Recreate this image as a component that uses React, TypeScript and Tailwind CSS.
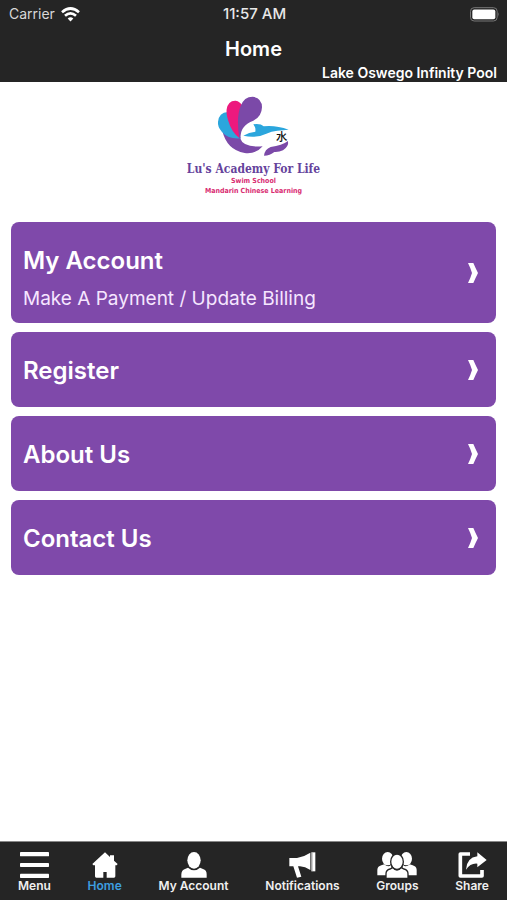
import type { ReactNode } from 'react';

type Entry = { title: string; detail?: string };

const entries: Entry[] = [
  { title: 'My Account', detail: 'Make A Payment / Update Billing' },
  { title: 'Register' },
  { title: 'About Us' },
  { title: 'Contact Us' },
];

function WifiIcon() {
  return (
    <svg viewBox="0 0 57 44" className="h-[15px] w-[19px]" fill="none" stroke="white" strokeWidth="8" aria-hidden="true">
      <path d="M3 15Q28.500-7 54 15" />
      <path d="M12 26Q28.500 11 45 26" />
      <path d="M20 34Q28.500 26 37 34L28.500 43Z" fill="white" stroke="none" />
    </svg>
  );
}

function BatteryIcon() {
  return (
    <svg viewBox="0 0 90 44" className="h-[15px] w-[30px]" aria-label="Battery full">
      <rect x="1.500" y="1.500" width="80" height="40" rx="11" fill="#252525" stroke="#777" strokeWidth="3" />
      <rect x="7" y="7" width="69" height="29" rx="6" fill="white" />
      <path d="M85 15Q90 21 85 28Z" fill="#777" />
    </svg>
  );
}

function Logo() {
  return (
    <svg viewBox="0 0 240 210" className="h-[70px] w-20" aria-label="Lu's Academy For Life logo">
      <path d="M25 116Q48 137 78 138Q88 168 146 163Q126 187 92 183Q38 173 25 116Z" fill="#7b49a8" />
      <path d="M12 90Q14 62 42 60L60 98L80 139Q42 142 24 120Q10 104 12 90Z" fill="#2ba6dd" />
      <path d="M38 52Q42 25 65 26Q78 28 86 42L88 90L76 138Q52 120 42 84Q36 64 38 52Z" fill="#ed197e" />
      <path d="M76 138Q66 75 80 42Q90 14 116 14Q144 18 144 46Q143 74 118 86Q76 102 80 140Z" fill="#7b49a8" />
      <path d="M88 131Q105 121 124 119Q126 107 118 97Q140 94 149 103Q185 99 224 113L190 116Q172 117 157 125Q126 140 88 131Z" fill="#2ba6dd" />
      <path d="M150 191Q152 172 170 165Q204 161 222 147Q225 163 207 175Q195 181 181 180Q168 191 150 191Z" fill="#7b49a8" />
      <text x="203" y="146" textAnchor="middle" fontSize="34" fill="#111" className="font-['Noto_Sans_CJK_SC',sans-serif] font-medium">水</text>
    </svg>
  );
}

function Chevron() {
  return (
    <svg viewBox="0 0 30 60" className="h-5 w-[10px]" fill="white" aria-hidden="true">
      <path d="M0 0H16Q22 14 30 30Q22 46 16 60H0Q8 44 12 30Q8 16 0 0Z" />
    </svg>
  );
}

function MenuIcon() {
  return (
    <svg viewBox="0 0 87 78" className="h-[26px] w-[29px]" fill="white" aria-hidden="true">
      <rect y="0" width="87" height="13" rx="2" />
      <rect y="33" width="87" height="12" rx="2" />
      <rect y="65" width="87" height="13" rx="2" />
    </svg>
  );
}

function HomeIcon() {
  return (
    <svg viewBox="0 0 78 78" className="h-[26px] w-[26px]" fill="white" aria-hidden="true">
      <path d="M39 1L1 36L4 40H9V73Q9 77 13 77H34V60H44V77H66Q70 77 70 73V40H74L77 36L66 26V10H54V15Z" />
    </svg>
  );
}

function PersonIcon() {
  return (
    <svg viewBox="0 0 78 78" className="h-[26px] w-[26px]" fill="white" aria-hidden="true">
      <ellipse cx="39" cy="25" rx="20" ry="25" />
      <path d="M1 77V67Q2 54 12 51L21 47Q39 63 57 47L66 51Q77 54 77 67V77Z" />
    </svg>
  );
}

function MegaphoneIcon() {
  return (
    <svg viewBox="0 0 81 78" className="h-[26px] w-[27px]" fill="white" aria-hidden="true">
      <path d="M1 18H24Q46 14 64 2V54Q48 44 33 43H27L37 74L24 77L13 43H1Z" />
      <rect x="67" y="1" width="12" height="57" />
      <path d="M69 2V57" stroke="#777" strokeWidth="2" />
    </svg>
  );
}

function GroupIcon() {
  return (
    <svg viewBox="0 0 120 78" className="h-[26px] w-10" fill="white" aria-hidden="true">
      <ellipse cx="32" cy="20" rx="17" ry="20" />
      <ellipse cx="88" cy="20" rx="17" ry="20" />
      <path d="M1 70V53Q2 43 13 40L22 37Q33 47 42 39L48 70Z" />
      <path d="M119 70V53Q118 43 107 40L98 37Q87 47 78 39L72 70Z" />
      <g stroke="#252525" strokeWidth="4">
        <path d="M27 79V65Q27 54 39 51L47 47Q60 61 73 47L81 51Q93 54 93 65V79Z" />
        <ellipse cx="60" cy="29" rx="19" ry="23" />
      </g>
    </svg>
  );
}

function ShareIcon() {
  return (
    <svg viewBox="0 0 87 78" className="h-[26px] w-[29px]" aria-hidden="true">
      <path d="M36 6H7V72H72V54" fill="none" stroke="white" strokeWidth="11" strokeLinejoin="round" />
      <path d="M58 1L86 24L58 46V35Q37 33 24 53Q26 17 58 13Z" fill="white" />
    </svg>
  );
}

const tabs: { label: string; icon: ReactNode; active?: boolean }[] = [
  { label: 'Menu', icon: <MenuIcon /> },
  { label: 'Home', icon: <HomeIcon />, active: true },
  { label: 'My Account', icon: <PersonIcon /> },
  { label: 'Notifications', icon: <MegaphoneIcon /> },
  { label: 'Groups', icon: <GroupIcon /> },
  { label: 'Share', icon: <ShareIcon /> },
];

export default function App() {
  return (
    <div className="flex min-h-screen flex-col bg-white font-['Inter',sans-serif] text-white">
      <header className="bg-[#252525]">
        <div className="grid h-7 grid-cols-3 items-center pr-[7px] pl-[9px] text-sm">
          <div className="flex items-center gap-1.5 text-[#d8d8d8]">
            <span>Carrier</span>
            <WifiIcon />
          </div>
          <time className="text-center text-[15px] font-medium text-[#e8e8e8]">11:57 AM</time>
          <div className="flex justify-end"><BatteryIcon /></div>
        </div>
        <h1 className="pt-[7px] text-center text-xl leading-7 font-semibold">Home</h1>
        <p className="pt-px pr-2.5 pb-px text-right text-sm leading-[17px] font-semibold">Lake Oswego Infinity Pool</p>
      </header>

      <main className="flex flex-1 flex-col">
        <div className="flex flex-col items-center pt-2.5 pb-[26px]">
          <Logo />
          <p className="font-['DejaVu_Serif_Condensed','DejaVu_Serif',serif] text-xs leading-[14px] font-bold text-[#65439c]">Lu's Academy For Life</p>
          <p className="font-['DejaVu_Sans_Condensed','DejaVu_Sans',sans-serif] text-[7px] leading-[10px] font-bold text-[#d92c72]">Swim School</p>
          <p className="font-['DejaVu_Sans_Condensed','DejaVu_Sans',sans-serif] text-[7px] leading-[10px] font-bold text-[#d92c72]">Mandarin Chinese Learning</p>
        </div>
        <div className="flex flex-col gap-[9px] px-[11px] pb-6">
          {entries.map(({ title, detail }) => (
            <button
              key={title}
              type="button"
              className="flex w-full items-center justify-between rounded-lg bg-[#7f49aa] pr-[18px] pl-3 text-left"
            >
              <span className={detail ? 'flex flex-col pt-5 pb-3' : 'flex flex-col pt-5 pb-[18px]'}>
                <span className="text-2xl leading-[37px] font-semibold">{title}</span>
                {detail && <span className="pt-2 text-[19px] leading-6 text-[#f6e6ff]">{detail}</span>}
              </span>
              <Chevron />
            </button>
          ))}
        </div>
      </main>

      <nav className="flex h-[59px] items-start justify-between border-t border-[#888] bg-[#252525] px-[18px] pt-2.5">
        {tabs.map(({ label, icon, active }) => (
          <button key={label} type="button" className="flex flex-col items-center">
            {icon}
            <span className={active ? 'text-xs leading-4 font-semibold text-[#3d9fe0]' : 'text-xs leading-4 font-semibold text-[#f0f0f0]'}>{label}</span>
          </button>
        ))}
      </nav>
    </div>
  );
}
